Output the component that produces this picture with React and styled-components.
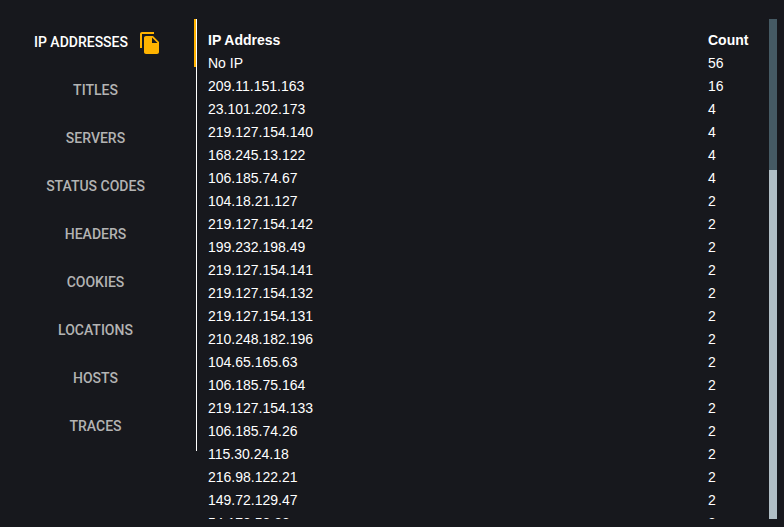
import { useEffect, useRef, useState } from "react";
import styled, { createGlobalStyle } from "styled-components";

const GlobalStyle = createGlobalStyle`
    * {
        box-sizing: border-box;
    }
    body {
        margin: 0;
        background: #17181d;
        color: #ffffff;
        font-family: "Liberation Sans", Arial, sans-serif;
        font-size: 14px;
    }
`;

const Page = styled.main`
    display: flex;
    align-items: flex-start;
    padding: 19px 7px 8px 0;
    height: 100vh;
`;

const TabList = styled.div`
    flex: 0 0 197px;
    display: flex;
    flex-direction: column;
    border-right: 1px solid #ffffff;
`;

const Tab = styled.button`
    display: flex;
    align-items: center;
    justify-content: center;
    gap: 10px;
    height: 48px;
    padding: 0 3px 0 0;
    border: 0;
    border-right: 2px solid ${({ $active }) => ($active ? "#ffb300" : "transparent")};
    background: transparent;
    color: ${({ $active }) => ($active ? "#ffffff" : "#b3b3b3")};
    font-family: Roboto, sans-serif;
    font-size: 14px;
    font-weight: 500;
    line-height: 24px;
    text-transform: uppercase;
    cursor: pointer;
`;

const TabLabel = styled.span`
    padding-bottom: 2px;
`;

const CopyIcon = styled.svg`
    width: 24px;
    height: 24px;
    margin-right: -5px;
    fill: #ffb300;
`;

const Panel = styled.section`
    flex: 1;
    min-width: 0;
    height: 100%;
    padding: 10px 10px 0 11px;
    overflow-y: scroll;
    scrollbar-width: none;
`;

const ScrollTrack = styled.div`
    flex: 0 0 8px;
    height: 100%;
    background: #b0bec5;
`;

const ScrollThumb = styled.div`
    background: #455a64;
`;

const Table = styled.table`
    width: 100%;
    border-collapse: collapse;
    table-layout: fixed;
    margin-bottom: 1140px;
`;

const Cell = styled.td`
    height: 23px;
    padding: 0;
    line-height: 23px;
    text-align: left;
`;

const CountHead = styled(Cell)`
    width: 51px;
`;

const tabs = [
    "IP Addresses",
    "Titles",
    "Servers",
    "Status Codes",
    "Headers",
    "Cookies",
    "Locations",
    "Hosts",
    "Traces",
];

const rows = [
    ["No IP", 56],
    ["209.11.151.163", 16],
    ["23.101.202.173", 4],
    ["219.127.154.140", 4],
    ["168.245.13.122", 4],
    ["106.185.74.67", 4],
    ["104.18.21.127", 2],
    ["219.127.154.142", 2],
    ["199.232.198.49", 2],
    ["219.127.154.141", 2],
    ["219.127.154.132", 2],
    ["219.127.154.131", 2],
    ["210.248.182.196", 2],
    ["104.65.165.63", 2],
    ["106.185.75.164", 2],
    ["219.127.154.133", 2],
    ["106.185.74.26", 2],
    ["115.30.24.18", 2],
    ["216.98.122.21", 2],
    ["149.72.129.47", 2],
    ["54.172.53.22", 2],
];

function App() {
    const [active, setActive] = useState(tabs[0]);
    const [thumb, setThumb] = useState({ size: 0, offset: 0 });
    const panel = useRef();

    // thumb size and offset are percentages of the track
    const updateThumb = () => {
        const { clientHeight, scrollHeight, scrollTop } = panel.current;
        setThumb({
            size: (clientHeight / scrollHeight) * 100,
            offset: (scrollTop / scrollHeight) * clientHeight,
        });
    };

    useEffect(() => {
        updateThumb();
        window.addEventListener("resize", updateThumb);
        return () => window.removeEventListener("resize", updateThumb);
    }, []);

    return (
        <>
            <GlobalStyle />
            <Page>
                <TabList role="tablist" aria-orientation="vertical">
                    {tabs.map((tab) => (
                        <Tab
                            key={tab}
                            role="tab"
                            aria-selected={tab === active}
                            $active={tab === active}
                            onClick={() => setActive(tab)}
                        >
                            <TabLabel>{tab}</TabLabel>
                            {tab === active ? (
                                <CopyIcon viewBox="0 0 24 24" aria-hidden="true">
                                    <path d="M16 1H4c-1.100 0-2 .9-2 2v14h2V3h12V1zm-1 4l6 6v10c0 1.100-.9 2-2 2H7.990C6.890 23 6 22.100 6 21l.01-14c0-1.100.89-2 1.990-2h7zm-1 7h5.500L14 6.500V12z" />
                                </CopyIcon>
                            ) : null}
                        </Tab>
                    ))}
                </TabList>
                <Panel
                    ref={panel}
                    role="tabpanel"
                    aria-label={active}
                    tabIndex={0}
                    onScroll={updateThumb}
                >
                    <Table>
                        <thead>
                            <tr>
                                <Cell as="th" scope="col">IP Address</Cell>
                                <CountHead as="th" scope="col">Count</CountHead>
                            </tr>
                        </thead>
                        <tbody>
                            {rows.map(([ip, count]) => (
                                <tr key={ip}>
                                    <Cell>{ip}</Cell>
                                    <Cell>{count}</Cell>
                                </tr>
                            ))}
                        </tbody>
                    </Table>
                </Panel>
                <ScrollTrack aria-hidden="true">
                    <ScrollThumb
                        style={{
                            height: `${thumb.size}%`,
                            transform: `translateY(${thumb.offset}px)`,
                        }}
                    />
                </ScrollTrack>
            </Page>
        </>
    );
}

export default App;
